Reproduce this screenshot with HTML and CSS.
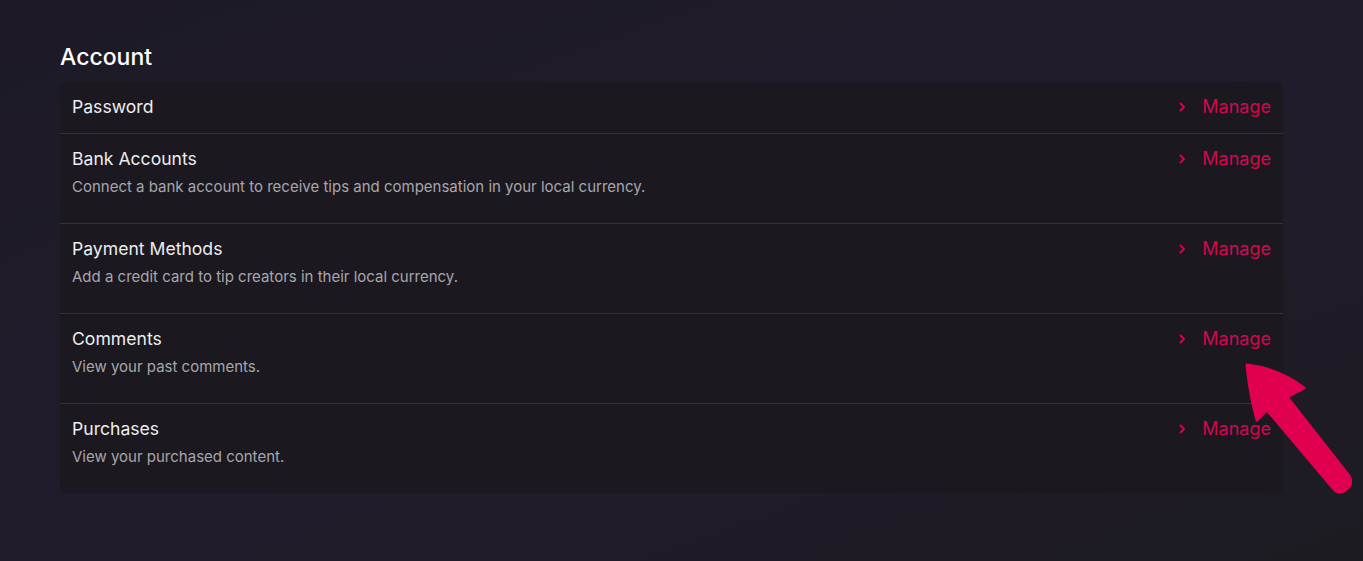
FILE: index.html
```html
<!DOCTYPE html>
<html>
<head>
<meta charset="utf-8">
<link rel="stylesheet" href="styles.css">
</head>
<body>
<main class="page">
  <h2 class="section-title">Account</h2>
  <div class="card">
    <div class="row">
      <div class="row-main">
        <div class="row-title">Password</div>
      </div>
      <a class="manage"><svg class="chev" width="8" height="12" viewBox="0 0 8 12"><path d="M2 2 L6 6 L2 10" fill="none" stroke="currentColor" stroke-width="1.8"/></svg>Manage</a>
    </div>
    <div class="row">
      <div class="row-main">
        <div class="row-title">Bank Accounts</div>
        <div class="row-desc">Connect a bank account to receive tips and compensation in your local currency.</div>
      </div>
      <a class="manage"><svg class="chev" width="8" height="12" viewBox="0 0 8 12"><path d="M2 2 L6 6 L2 10" fill="none" stroke="currentColor" stroke-width="1.8"/></svg>Manage</a>
    </div>
    <div class="row">
      <div class="row-main">
        <div class="row-title">Payment Methods</div>
        <div class="row-desc">Add a credit card to tip creators in their local currency.</div>
      </div>
      <a class="manage"><svg class="chev" width="8" height="12" viewBox="0 0 8 12"><path d="M2 2 L6 6 L2 10" fill="none" stroke="currentColor" stroke-width="1.8"/></svg>Manage</a>
    </div>
    <div class="row">
      <div class="row-main">
        <div class="row-title">Comments</div>
        <div class="row-desc">View your past comments.</div>
      </div>
      <a class="manage"><svg class="chev" width="8" height="12" viewBox="0 0 8 12"><path d="M2 2 L6 6 L2 10" fill="none" stroke="currentColor" stroke-width="1.8"/></svg>Manage</a>
    </div>
    <div class="row">
      <div class="row-main">
        <div class="row-title">Purchases</div>
        <div class="row-desc">View your purchased content.</div>
      </div>
      <a class="manage"><svg class="chev" width="8" height="12" viewBox="0 0 8 12"><path d="M2 2 L6 6 L2 10" fill="none" stroke="currentColor" stroke-width="1.8"/></svg>Manage</a>
    </div>
  </div>
  <svg class="pointer" width="120" height="145" viewBox="0 0 120 145">
    <path d="M7 10 Q 40 14 64 33 L 47 42 L 109 121 Q 114 130 104 136 Q 97 139 93 133 L 27 55 L 17 65 Q 10 40 7 10 Z" fill="#e0004f" stroke="#e0004f" stroke-width="3" stroke-linejoin="round"/>
  </svg>
</main>
</body>
</html>
```
FILE: styles.css
```css
* { box-sizing: border-box; }
html, body {
  margin: 0;
  height: 100%;
}
body {
  background: linear-gradient(160deg, #1d1a26 0%, #211c2c 50%, #1d1b22 100%);
  font-family: Inter, Roboto, sans-serif;
  color: #f1f1f3;
}
.page {
  position: relative;
  padding: 43px 80px 0 60px;
}
.section-title {
  margin: 0 0 11px 0;
  font-size: 23px;
  font-weight: 500;
  line-height: 28px;
  color: #ffffff;
}
.card {
  background: #1b191f;
  border-radius: 6px;
  overflow: hidden;
}
.row {
  display: flex;
  justify-content: space-between;
  align-items: flex-start;
  padding: 14px 12px 15px;
  border-top: 1px solid #34323a;
}
.row:first-child { border-top: none; }
.row-title {
  font-size: 17.6px;
  font-weight: 400;
  line-height: 22px;
  color: #ececef;
}
.row-desc {
  margin-top: 7px;
  margin-bottom: 11px;
  font-size: 15px;
  line-height: 20px;
  color: #a7a6ad;
}
.manage {
  display: flex;
  align-items: center;
  font-size: 18px;
  line-height: 22px;
  color: #d4084f;
  text-decoration: none;
}
.chev {
  margin-right: 16px;
  color: #e0004f;
}
.pointer {
  position: absolute;
  left: 1240px;
  top: 355px;
}
```
